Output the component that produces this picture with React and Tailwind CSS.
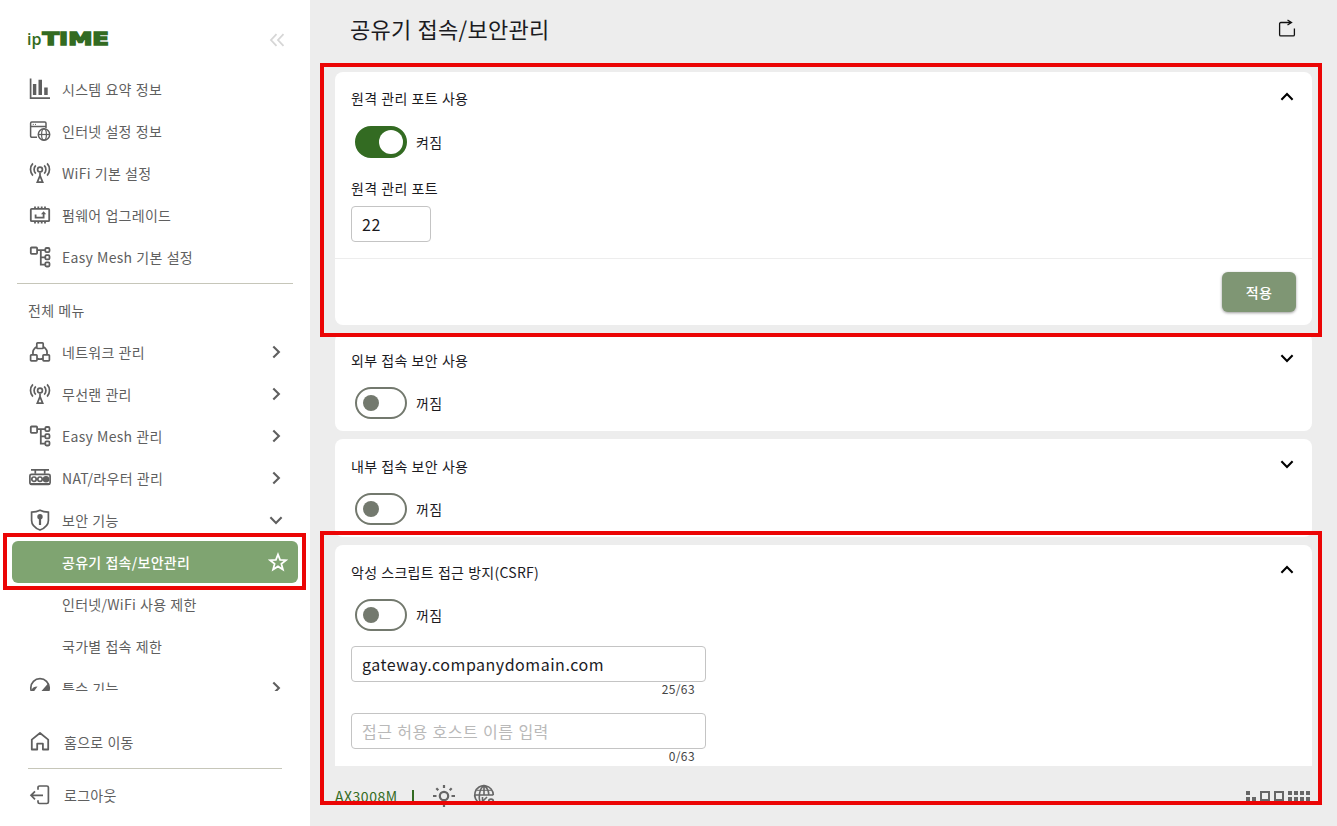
import { useState } from "react";
import clsx from "clsx";

const Icon = ({ children, width = 1.7 }) => (
  <svg
    viewBox="0 0 22 22"
    className="w-[22px] h-[22px] shrink-0"
    fill="none"
    stroke="currentColor"
    strokeWidth={width}
  >
    {children}
  </svg>
);

const ChartIcon = () => (
  <Icon>
    <path d="M1.6 0.5V20.1H21" />
    <path d="M3.9 6h3.4v11H3.9zM9.5 1.8H13V17H9.5zM15.2 9.5h3.5V17h-3.5z" fill="currentColor" stroke="none" />
  </Icon>
);

const InternetIcon = () => (
  <Icon width={1.5}>
    <path d="M8 17.3H2.8a1.2 1.2 0 0 1-1.2-1.2V3.2A1.2 1.2 0 0 1 2.8 2h13a1.2 1.2 0 0 1 1.2 1.2V8M1.6 6.6H17" />
    <path d="M3.8 4.4h1M6 4.4h1" strokeWidth="1" />
    <circle cx="15" cy="14.5" r="5.7" />
    <ellipse cx="15" cy="14.5" rx="2.4" ry="5.7" strokeWidth="1.2" />
    <path d="M9.3 14.5h11.4" strokeWidth="1.2" />
  </Icon>
);

const WifiIcon = () => (
  <Icon width={1.7}>
    <circle cx="11" cy="7.5" r="2.4" />
    <path d="M11 13.6 8.3 20.2h5.4zM11 10.5V14" />
    <path d="M6.8 3.3a6 6 0 0 0 0 8.4M15.2 3.3a6 6 0 0 1 0 8.4M3.9 1.4a9 9 0 0 0 0 12.2M18.1 1.4a9 9 0 0 1 0 12.2" />
  </Icon>
);

const FirmwareIcon = () => (
  <Icon width={1.8}>
    <rect x="1.8" y="4.8" width="18.4" height="12.4" rx="1" />
    <path d="M6 2.4v2.4M9.3 2.4v2.4M12.7 2.4v2.4M16 2.4v2.4M6 17.2v2.2M9.3 17.2v2.2M12.7 17.2v2.2M16 17.2v2.2" />
    <path d="M6.6 10.6v3h8V9" />
    <path d="M12 10.2 14.6 7.2l2.6 3z" fill="currentColor" stroke="none" />
  </Icon>
);

const MeshIcon = () => (
  <Icon width={1.8}>
    <rect x="1.8" y="1.5" width="6.3" height="6.3" rx="0.8" />
    <path d="M8.1 4.2h8.2M11.8 4.2v14.4h4.5M11.8 11.4h4.5" />
    <rect x="16.3" y="2" width="4.2" height="4.2" rx="1.2" />
    <rect x="16.3" y="9.2" width="4.2" height="4.2" rx="1.2" />
    <rect x="16.3" y="16.3" width="4.2" height="4.2" rx="1.2" />
  </Icon>
);

const NetworkIcon = () => (
  <Icon>
    <rect x="7.8" y="1.9" width="6.4" height="5.6" rx="0.8" />
    <rect x="1.6" y="13.8" width="6.4" height="6" rx="0.8" />
    <rect x="14" y="13.8" width="6.4" height="6" rx="0.8" />
    <path d="M8 5.5a8 8 0 0 0-4 8.3M14 5.5a8 8 0 0 1 4 8.3M8 17.6c2 .7 4 .7 6 0" />
  </Icon>
);

const RouterIcon = () => (
  <Icon width={1.7}>
    <path d="M2 2.8h18M6.3 2.8v4M15.7 2.8v4" />
    <rect x="0.9" y="7.3" width="20.2" height="10" rx="1.5" />
    <circle cx="5" cy="12.2" r="2.2" />
    <circle cx="11" cy="12.2" r="2.2" />
    <circle cx="17" cy="12.2" r="2.4" fill="currentColor" />
    <path d="M1 17h20" strokeWidth="2" />
  </Icon>
);

const ShieldIcon = () => (
  <Icon width={1.7}>
    <path d="M11 1.2c2.6 1.4 5.6 1.9 8.4 2v8.2c0 4.2-3.6 7.6-8.4 9.6-4.8-2-8.4-5.4-8.4-9.6V3.2c2.8-.1 5.800-.6 8.400-2z" />
    <circle cx="11" cy="7.8" r="2.7" fill="currentColor" stroke="none" />
    <path d="M11 8v8" strokeWidth="2.2" />
  </Icon>
);

const GaugeIcon = () => (
  <Icon>
    <path d="M4.6 17.500a9.2 9.2 0 1 1 12.8 0" />
    <path d="M2.5 13.500c.5-2.500 2.500-4 6-4L4.500 15zM12.500 14l7-8 1 5-1 4z" fill="currentColor" stroke="none" />
  </Icon>
);

const HomeIcon = () => (
  <Icon width={1.8}>
    <path d="M2.8 18.5V8.6L11 2l8.200 6.600v9.900h-5.300v-5.800H8.200v5.800z" strokeLinejoin="round" />
  </Icon>
);

const LogoutIcon = () => (
  <Icon width={1.7}>
    <path d="M9 5.8V3.6C9 2.7 9.700 2 10.600 2h7.200c.9 0 1.600.7 1.600 1.600v14.300c0 .9-.7 1.600-1.600 1.600h-7.200c-.9 0-1.600-.7-1.600-1.600v-1.600M14 11.300H2M6 7.300l-4 4 4 4" />
  </Icon>
);

const Chevron = ({ dir = "right", className }) => (
  <svg
    viewBox="0 0 14 14"
    className={clsx(
      "w-[14px] h-[14px] shrink-0",
      dir === "down" && "rotate-90",
      dir === "up" && "-rotate-90",
      className
    )}
    fill="none"
    stroke="currentColor"
    strokeWidth="2.1"
  >
    <path d="M4.3 1.4 9.9 7l-5.6 5.600" />
  </svg>
);

const QUICK_MENU = [
  { label: "시스템 요약 정보", icon: ChartIcon },
  { label: "인터넷 설정 정보", icon: InternetIcon },
  { label: "WiFi 기본 설정", icon: WifiIcon },
  { label: "펌웨어 업그레이드", icon: FirmwareIcon },
  { label: "Easy Mesh 기본 설정", icon: MeshIcon },
];

const ALL_MENU = [
  { label: "네트워크 관리", icon: NetworkIcon },
  { label: "무선랜 관리", icon: WifiIcon },
  { label: "Easy Mesh 관리", icon: MeshIcon },
  { label: "NAT/라우터 관리", icon: RouterIcon },
  {
    label: "보안 기능",
    icon: ShieldIcon,
    children: ["공유기 접속/보안관리", "인터넷/WiFi 사용 제한", "국가별 접속 제한"],
  },
  { label: "특수 기능", icon: GaugeIcon },
];

const MenuRow = ({ item, arrow }) => {
  const ItemIcon = item.icon;
  return (
    <div className="flex items-center h-[42px] pl-[29px] pr-[27px] cursor-pointer">
      <ItemIcon />
      <span className="ml-[11px] pb-px flex-1">{item.label}</span>
      {arrow && <Chevron dir={item.children ? "down" : "right"} />}
    </div>
  );
};

const Sidebar = () => {
  const [active, setActive] = useState("공유기 접속/보안관리");

  return (
    <aside className="w-[310px] h-full shrink-0 bg-white text-[#5f5f5f] flex flex-col">
      <div className="h-[68px] flex items-start justify-between pl-[27px] pr-[25px] pt-[28px]">
        <svg viewBox="0 0 84 24" className="w-[84px] h-[24px]" fill="#336b22">
          <text x="0" y="17.3" fontSize="15.5" fontWeight="600" fontFamily="'Open Sans', sans-serif" letterSpacing="0" textLength="14.5" lengthAdjust="spacingAndGlyphs">
            ip
          </text>
          <text
            x="15.5"
            y="16.8"
            fontSize="17.3"
            fontWeight="700"
            fontFamily="'DejaVu Sans', sans-serif"
            letterSpacing="0"
            textLength="66.5"
            lengthAdjust="spacingAndGlyphs"
            stroke="#336b22"
            strokeWidth="1.4"
          >
            TIME
          </text>
        </svg>
        <svg viewBox="0 0 16 14" className="w-[16px] h-[14px] mt-[5px]" fill="none" stroke="#d6d6d6" strokeWidth="1.8">
          <path d="M7.5 1.2 2 7l5.5 5.8M14.5 1.2 9 7l5.5 5.8" />
        </svg>
      </div>

      {QUICK_MENU.map((item) => (
        <MenuRow key={item.label} item={item} />
      ))}
      <div className="h-px shrink-0 mt-[5px] mx-[17px] bg-[#c6c6b9]" />

      <div className="h-[47px] pt-[15px] pl-[28px] leading-[22px]">전체 메뉴</div>

      <div className="h-[360px] overflow-hidden">
        {ALL_MENU.map((item) => (
          <div key={item.label}>
            <MenuRow item={item} arrow />
            {item.children?.map((child) => (
              <div
                key={child}
                onClick={() => setActive(child)}
                className={clsx(
                  "flex items-center justify-between h-[42px] mx-3 pl-[50px] pr-[10px] rounded-md cursor-pointer",
                  child === active && "bg-[#7fa471] text-white font-medium"
                )}
              >
                <span className="pb-px">{child}</span>
                {child === active && (
                  <svg viewBox="0 0 20 20" className="w-[20px] h-[20px]" fill="none" stroke="#fff" strokeWidth="1.8">
                    <path d="m10 2.5 2.1 5.4 5.8.3-4.5 3.7 1.5 5.6-4.9-3.1-4.9 3.1 1.500-5.600-4.500-3.700 5.800-.3z" />
                  </svg>
                )}
              </div>
            ))}
          </div>
        ))}
      </div>

      <div className="flex items-center h-[42px] mt-[30px] pl-[29px] gap-[13px] cursor-pointer">
        <HomeIcon />
        <span>홈으로 이동</span>
      </div>
      <div className="h-px shrink-0 mt-[5px] mx-[28px] bg-[#c6c6b9]" />
      <div className="flex items-center h-[42px] mt-[5px] pl-[29px] gap-[13px] cursor-pointer">
        <LogoutIcon />
        <span>로그아웃</span>
      </div>
    </aside>
  );
};

const Toggle = ({ initial }) => {
  const [on, setOn] = useState(initial);
  return (
    <div className="flex items-center mt-[17px] ml-1">
      <button
        onClick={() => setOn(!on)}
        className={clsx(
          "w-[52px] h-[32px] rounded-full border-2 flex items-center cursor-pointer",
          on ? "bg-[#336b22] border-[#336b22] justify-end pr-[2px]" : "bg-white border-[#73796e] pl-[6px]"
        )}
      >
        <span className={clsx("rounded-full", on ? "size-6 bg-white" : "size-4 bg-[#73796e]")} />
      </button>
      <span className="ml-[9px] pb-px">{on ? "켜짐" : "꺼짐"}</span>
    </div>
  );
};

const Card = ({ title, open, on = false, className, children }) => (
  <section className={clsx("bg-white rounded-lg mb-2", className)}>
    <div className="px-4 pt-[15px]">
      <div className="flex justify-between h-[22px] leading-[22px]">
        <span className={clsx(!on && "pt-px")}>{title}</span>
        <Chevron dir={open ? "up" : "down"} className="mr-[2px] mt-[3px] text-black" />
      </div>
      <Toggle initial={on} />
    </div>
    {children}
  </section>
);

const HostField = ({ value, placeholder }) => {
  const [host, setHost] = useState(value);
  return (
    <div className="w-[355px] h-[67px]">
      <input
        value={host}
        maxLength={63}
        placeholder={placeholder}
        onChange={(e) => setHost(e.target.value)}
        className="block w-full h-9 px-[10px] border border-[#c4c4c4] rounded text-base tracking-[0.52px] [word-spacing:0.7px] placeholder:text-[#b9b9b9] outline-none"
      />
      <div className="text-right text-xs leading-[14px] tracking-[0.4px] pr-[11px] text-[#444]">{host.length}/63</div>
    </div>
  );
};

const Footer = () => (
  <footer className="h-[60px] pl-[25px] pr-[27px] flex items-start text-[#666]">
    <span className="mt-[19px] text-[#336b22] leading-[22px] tracking-[0.5px]">AX3008M</span>
    <span className="ml-[14px] mt-[24px] w-[2px] h-[14px] bg-[#336b22]" />
    <svg viewBox="0 0 24 24" className="ml-[18px] mt-[18px] w-6 h-6" fill="none" stroke="currentColor" strokeWidth="2.2">
      <circle cx="12" cy="12" r="4.2" />
      <path d="M12 1v3M12 20v3M1 12h3.500M19.500 12H23M4.300 4.300l2 2M17.700 17.700l2 2M19.700 4.300l-2 2M6.300 17.700l-2 2" />
    </svg>
    <svg viewBox="0 0 22 22" className="ml-[17px] mt-[18px] w-[22px] h-[22px]" fill="none" stroke="currentColor" strokeWidth="1.6">
      <path d="M7 19.300A9.300 9.300 0 1 1 20.300 11M1.700 11h18.600M7 18.500C5.500 13 6 5 11 1.700c4 2.500 4.800 6 4.800 9.300M11 1.700V11" />
      <path d="M3.500 6.300h15" strokeWidth="1" />
      <path d="M9.500 13v7M14 13l-4 4 4 3.500" />
      <circle cx="18" cy="17.5" r="2.4" />
    </svg>
    <svg viewBox="0 0 64 16" className="ml-auto mt-[25px] w-[64px] h-[16px]" fill="currentColor">
      <path d="M0 0h4v4H0zM0 6h4v4H0zM6 6h4v4H6zM42 0h4v4h-4zM48 0h4v4h-4zM54 0h4v4h-4zM60 0h4v4h-4zM42 6h4v4h-4zM48 6h4v4h-4zM54 6h4v4h-4zM60 6h4v4h-4z" />
      <path d="M15 1h8v8h-8zM29 1h8v8h-8z" fill="none" stroke="currentColor" strokeWidth="2" />
    </svg>
  </footer>
);

const App = () => {
  const [port, setPort] = useState("22");

  return (
    <div className="relative flex w-full h-screen overflow-hidden bg-[#ededed] text-[#1b1b1f] text-sm tracking-[0.27px] [word-spacing:0.6px] font-['Noto_Sans_CJK_KR','Noto_Sans',sans-serif]">
      <Sidebar />

      <main className="flex-1 min-w-0 flex flex-col">
        <header className="h-[72px] shrink-0 flex items-start justify-between pl-[40px] pr-[41px]">
          <h1 className="mt-[12px] text-[22px] leading-[32px] tracking-[0.3px]">공유기 접속/보안관리</h1>
          <svg viewBox="0 0 18 20" className="w-[18px] h-[20px] mt-[18px]" fill="none" stroke="#111" strokeWidth="1.3">
            <path d="M12.500 4.500H2.800c-.7 0-1.200.5-1.200 1.200v11c0 .7.500 1.200 1.200 1.200h12.400c.7 0 1.200-.5 1.200-1.200V10.500M9.500 2l4 2.500-4 2.500" />
          </svg>
        </header>

        <div className="h-[694px] shrink-0 overflow-hidden px-[25px]">
          <Card title="원격 관리 포트 사용" open on>
            <div className="px-4 mt-[19px]">
              <div className="leading-[22px]">원격 관리 포트</div>
              <input
                value={port}
                onChange={(e) => setPort(e.target.value)}
                className="block mt-[7px] w-[80px] h-9 px-[10px] border border-[#c4c4c4] rounded text-base tracking-[0.52px] outline-none"
              />
            </div>
            <div className="mt-4 h-[67px] border-t border-[#ededed] flex justify-end pt-[13px] pr-4">
              <button className="w-[74px] h-10 pb-px rounded-md bg-[#7f9674] text-white font-medium shadow-[0_1px_3px_rgba(0,0,0,0.4)] cursor-pointer">
                적용
              </button>
            </div>
          </Card>
          <Card title="외부 접속 보안 사용" className="h-[98px]" />
          <Card title="내부 접속 보안 사용" className="h-[98px]" />
          <Card title="악성 스크립트 접근 방지(CSRF)" open className="h-[330px]">
            <div className="px-4 mt-[15px]">
              <HostField value="gateway.companydomain.com" />
              <HostField value="" placeholder="접근 허용 호스트 이름 입력" />
            </div>
          </Card>
        </div>

        <Footer />
      </main>

      {/* highlight boxes */}
      <div className="absolute left-[3px] top-[533px] w-[303px] h-[57px] border-4 border-[#eb0505] pointer-events-none" />
      <div className="absolute left-[320px] top-[63px] w-[1002px] h-[274px] border-4 border-[#eb0505] pointer-events-none" />
      <div className="absolute left-[320px] top-[531px] w-[1002px] h-[274px] border-4 border-[#eb0505] pointer-events-none" />
    </div>
  );
};

export default App;
